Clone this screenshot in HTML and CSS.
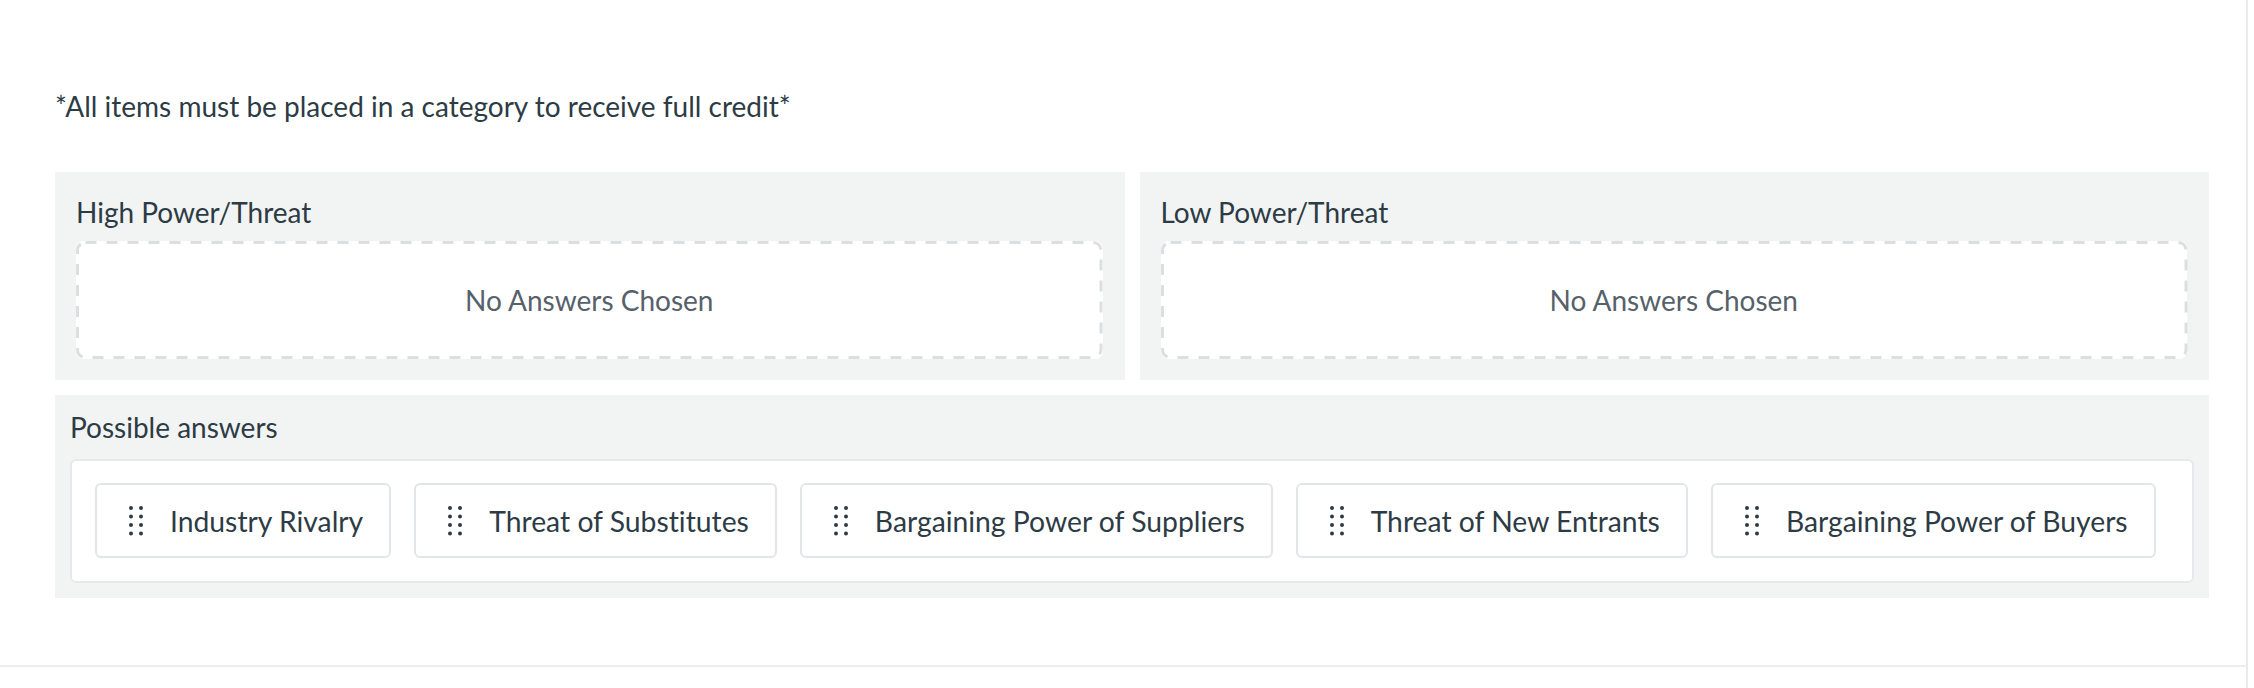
FILE: index.html
```html
<!DOCTYPE html>
<html lang="en">
<head>
<meta charset="utf-8">
<title>Categorize question</title>
<link rel="stylesheet" href="styles.css">
</head>
<body>
<div class="page">
  <div class="question">
    <p class="instructions">*All items must be placed in a category to receive full credit*</p>
    <div class="categories">
      <div class="panel category">
        <div class="panel-label">High Power/Threat</div>
        <div class="dropzone"><svg class="dash" aria-hidden="true"><rect rx="8" ry="8"/></svg><span>No Answers Chosen</span></div>
      </div>
      <div class="panel category">
        <div class="panel-label">Low Power/Threat</div>
        <div class="dropzone"><svg class="dash" aria-hidden="true"><rect rx="8" ry="8"/></svg><span>No Answers Chosen</span></div>
      </div>
    </div>
    <div class="panel answers">
      <div class="answers-label">Possible answers</div>
      <div class="answer-list">
        <div class="chip"><svg class="handle" viewBox="0 0 14 30" width="14" height="30"><g fill="#2d3b45"><circle cx="2" cy="2" r="2"/><circle cx="12" cy="2" r="2"/><circle cx="2" cy="10.5" r="2"/><circle cx="12" cy="10.5" r="2"/><circle cx="2" cy="19" r="2"/><circle cx="12" cy="19" r="2"/><circle cx="2" cy="27.5" r="2"/><circle cx="12" cy="27.5" r="2"/></g></svg><span>Industry Rivalry</span></div>
        <div class="chip"><svg class="handle" viewBox="0 0 14 30" width="14" height="30"><g fill="#2d3b45"><circle cx="2" cy="2" r="2"/><circle cx="12" cy="2" r="2"/><circle cx="2" cy="10.5" r="2"/><circle cx="12" cy="10.5" r="2"/><circle cx="2" cy="19" r="2"/><circle cx="12" cy="19" r="2"/><circle cx="2" cy="27.5" r="2"/><circle cx="12" cy="27.5" r="2"/></g></svg><span>Threat of Substitutes</span></div>
        <div class="chip"><svg class="handle" viewBox="0 0 14 30" width="14" height="30"><g fill="#2d3b45"><circle cx="2" cy="2" r="2"/><circle cx="12" cy="2" r="2"/><circle cx="2" cy="10.5" r="2"/><circle cx="12" cy="10.5" r="2"/><circle cx="2" cy="19" r="2"/><circle cx="12" cy="19" r="2"/><circle cx="2" cy="27.5" r="2"/><circle cx="12" cy="27.5" r="2"/></g></svg><span>Bargaining Power of Suppliers</span></div>
        <div class="chip"><svg class="handle" viewBox="0 0 14 30" width="14" height="30"><g fill="#2d3b45"><circle cx="2" cy="2" r="2"/><circle cx="12" cy="2" r="2"/><circle cx="2" cy="10.5" r="2"/><circle cx="12" cy="10.5" r="2"/><circle cx="2" cy="19" r="2"/><circle cx="12" cy="19" r="2"/><circle cx="2" cy="27.5" r="2"/><circle cx="12" cy="27.5" r="2"/></g></svg><span>Threat of New Entrants</span></div>
        <div class="chip"><svg class="handle" viewBox="0 0 14 30" width="14" height="30"><g fill="#2d3b45"><circle cx="2" cy="2" r="2"/><circle cx="12" cy="2" r="2"/><circle cx="2" cy="10.5" r="2"/><circle cx="12" cy="10.5" r="2"/><circle cx="2" cy="19" r="2"/><circle cx="12" cy="19" r="2"/><circle cx="2" cy="27.5" r="2"/><circle cx="12" cy="27.5" r="2"/></g></svg><span>Bargaining Power of Buyers</span></div>
      </div>
    </div>
  </div>
</div>
</body>
</html>
```
FILE: styles.css
```css
html, body {
  margin: 0;
  padding: 0;
  background: #ffffff;
}
body {
  font-family: Lato, "Open Sans", "Liberation Sans", sans-serif;
  color: #2d3b45;
  font-size: 28px;
  font-variant-ligatures: none;
}
.page {
  width: 2248px;
  height: 688px;
  box-sizing: border-box;
  border-right: 2px solid #e8eaec;
}
.question {
  box-sizing: border-box;
  height: 667px;
  padding: 86px 37px 0 55px;
  border-bottom: 2px solid #eceeef;
}
.instructions {
  margin: 0 0 46px 0;
  line-height: 40px;
}
.categories {
  display: grid;
  grid-template-columns: 1fr 1fr;
  gap: 15px;
}
.panel {
  background: #f2f4f4;
}
.category {
  padding: 21px 22px 21px 21px;
}
.panel-label {
  line-height: 39px;
  margin-bottom: 9px;
}
.dropzone {
  position: relative;
  height: 118px;
  box-sizing: border-box;
  border-radius: 8px;
  background: #ffffff;
  display: flex;
  align-items: center;
  justify-content: center;
  color: #56616b;
}
.dash {
  position: absolute;
  left: 0;
  top: 0;
  width: 100%;
  height: 100%;
  overflow: visible;
}
.dash rect {
  x: 1.5px;
  y: 1.5px;
  width: calc(100% - 3px);
  height: calc(100% - 3px);
  fill: none;
  stroke: #dcdfe2;
  stroke-width: 3px;
  stroke-dasharray: 11 10;
}
.dropzone span {
  position: relative;
}
.answers {
  margin-top: 15px;
  padding: 16px 15px 15px 15px;
}
.answers-label {
  line-height: 32px;
  margin-bottom: 16px;
}
.answer-list {
  background: #ffffff;
  border: 2px solid #e6e8eb;
  border-radius: 6px;
  padding: 22px 23px 23px 23px;
  display: flex;
  gap: 23px;
}
.chip {
  display: flex;
  align-items: center;
  height: 75px;
  box-sizing: border-box;
  border: 2px solid #e3e6e9;
  border-radius: 6px;
  padding: 0 26px 0 32px;
  background: #ffffff;
  font-size: 28.3px;
}
.handle {
  flex: none;
  margin-right: 27px;
}
.chip span {
  white-space: nowrap;
}
```
